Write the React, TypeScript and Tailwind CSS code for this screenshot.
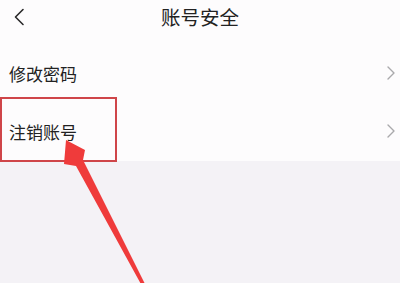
import React, { FC } from "react";

const Row: FC<{ label: string }> = ({ label }) => (
    <div className="flex h-[58px] items-center justify-between pl-[9px] pr-[5px]">
        <span className="text-[17px] leading-none text-[#222222]">{label}</span>
        <svg width="8" height="14" viewBox="0 0 8 14" fill="none">
            <path d="M1 1l6 6-6 6" stroke="#a9a9ab" strokeWidth="1.4" strokeLinecap="round" strokeLinejoin="round" />
        </svg>
    </div>
);

export default function App() {
    return (
        <div
            className="relative h-[283px] w-[400px] overflow-hidden bg-[#f4f2f6]"
            style={{ fontFamily: '"Noto Sans CJK SC", "Noto Sans", sans-serif' }}
        >
            <div className="bg-[#fdfcfd] pb-[1px]">
                <div className="relative flex h-[33px] items-center justify-center">
                    <svg className="absolute left-[13px] top-[8px]" width="12" height="18" viewBox="0 0 12 18" fill="none">
                        <path d="M10 1.5L2.5 9l7.5 7.5" stroke="#2a2a2a" strokeWidth="1.6" strokeLinecap="round" strokeLinejoin="round" />
                    </svg>
                    <span className="text-[19.5px] leading-none text-[#222222]">账号安全</span>
                </div>
                <div className="mt-[11px]">
                    <Row label="修改密码" />
                    <Row label="注销账号" />
                </div>
            </div>
            {/* annotation: red frame + arrow */}
            <div className="absolute left-0 top-[97px] h-[65px] w-[117px] border-2 border-[#cf4549]" />
            <svg className="absolute left-0 top-0" width="400" height="283" viewBox="0 0 400 283">
                <polygon points="66,140 85,150 83,160 146,286 142,286 76,166 64,164" fill="#ef3b3b" />
            </svg>
        </div>
    );
}
